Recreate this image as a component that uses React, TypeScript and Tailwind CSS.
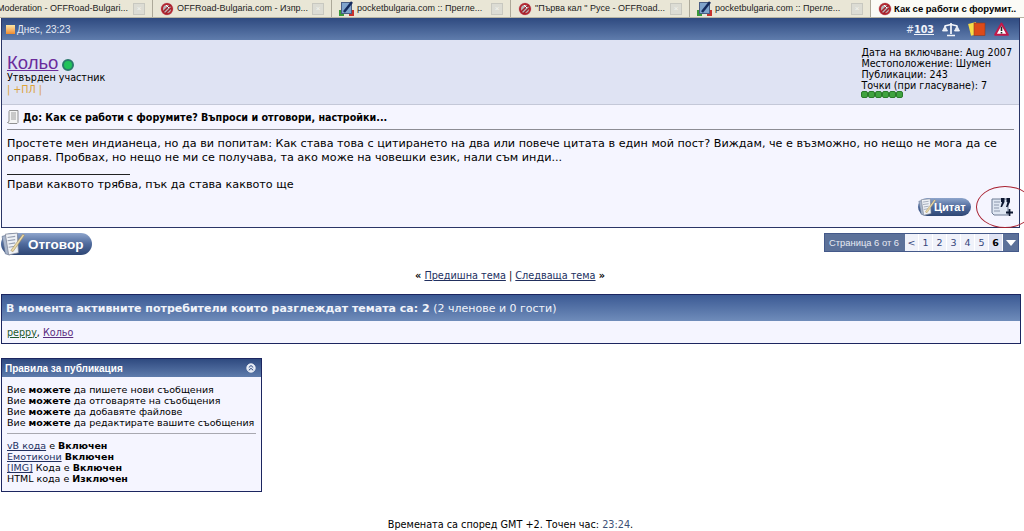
import React from 'react';

const tabs = [
  { w: 'w-[153px] pl-0', title: 'Moderation - OFFRoad-Bulgari...', icon: 'none', indent: '-ml-[3px]' },
  { w: 'w-[179px] pl-[7px]', title: 'OFFRoad-Bulgaria.com - Изпр...', icon: 'off' },
  { w: 'w-[179px] pl-[7px]', title: 'pocketbulgaria.com :: Прегле...', icon: 'pocket' },
  { w: 'w-[179px] pl-[7px]', title: '"Първа кал " Русе - OFFRoad...', icon: 'off' },
  { w: 'w-[181px] pl-[7px]', title: 'pocketbulgaria.com :: Прегле...', icon: 'pocket' },
];

function OffIcon() {
  return (
    <svg width="14" height="14" viewBox="0 0 14 14" className="shrink-0">
      <circle cx="7" cy="7" r="6.500" fill="#d9b9bd" />
      <circle cx="7" cy="7" r="5" fill="#b9b4b8" stroke="#b3262f" strokeWidth="2" />
      <path d="M3 10 7 6 11 3M5 12 11 6" stroke="#a11d28" strokeWidth="1.500" />
      <path d="M6 3 9 6" stroke="#fff" strokeWidth="1" />
    </svg>
  );
}

function PocketIcon() {
  return (
    <svg width="15" height="15" viewBox="0 0 15 15" className="shrink-0">
      <rect x="0" y="9" width="5" height="6" fill="#3a9a3a" />
      <rect x="10" y="9" width="5" height="6" fill="#c8322d" />
      <rect x="2.500" y="1.500" width="10" height="11" fill="#7fa3cc" stroke="#4a5d84" />
      <path d="M5 11 13 1" stroke="#142a5c" strokeWidth="2.500" />
    </svg>
  );
}

function CloseBox() {
  return <div className="w-[12px] h-[12px] shrink-0 bg-[#dcdcd4] border border-[#c8c8c0] flex items-center justify-center text-[8px] leading-none text-[#f5f5f0]">×</div>;
}

function Scales() {
  return (
    <svg width="18" height="15" viewBox="0 0 18 15">
      <path d="M9 1v11M5 13.500h8M2.500 4 9 2.500 15.500 4" stroke="#f4f6fb" strokeWidth="1.700" fill="none" />
      <path d="M3 4 .5 9h5zM15 4l-2.500 5h5z" fill="#dfe6f3" stroke="#fff" strokeWidth=".8" />
    </svg>
  );
}

function Cards() {
  return (
    <svg width="18" height="14" viewBox="0 0 18 14">
      <rect x="1.500" y="1" width="8" height="12" fill="#f6dc4a" transform="rotate(-14 5 7)" />
      <rect x="6" y="1" width="11" height="12.500" fill="#dc4a1a" stroke="#8e3a1e" strokeWidth=".6" />
    </svg>
  );
}

function Warning() {
  return (
    <svg width="15" height="14" viewBox="0 0 15 14">
      <path d="M7.500 1.500 13.800 12.800H1.200z" fill="#fff" stroke="#c2184a" strokeWidth="2" strokeLinejoin="round" />
      <path d="M7.500 4.500v4.500M7.500 10v1.500" stroke="#222" strokeWidth="1.600" />
    </svg>
  );
}

function NoteIcon() {
  return (
    <svg width="12" height="14" viewBox="0 0 12 14" className="shrink-0">
      <path d="M2.500.5h8.500v12l-1 1H2.500l-2-1 1.500-1v-10z" fill="#f4f4f4" stroke="#777" strokeWidth=".8" />
      <path d="M4 3h5M4 5h5M4 7h5M4 9h5" stroke="#888" strokeWidth=".8" />
    </svg>
  );
}

function PaperPen({ size = 22 }: { size?: number }) {
  return (
    <svg width={size} height={size} viewBox="0 0 22 22" className="shrink-0">
      <path d="M1 4 4 20 8 21 5 3z" fill="#a9b6cc" stroke="#5a6c8c" strokeWidth=".6" />
      <path d="M4 2 15 1 16 19 7 21z" fill="#eef1f6" stroke="#7d8494" strokeWidth=".7" />
      <path d="M6 5l7-1M6 8l7-1M7 11l6-1M7 14l6-1" stroke="#97a0b2" />
      <path d="M9 17 20 2l1.500 1L11 18z" fill="#ead9a8" stroke="#a38a56" strokeWidth=".5" />
    </svg>
  );
}

function MultiQuote() {
  return (
    <svg width="24" height="22" viewBox="0 0 24 22" className="shrink-0">
      <path d="M2 3h16v16H4l-2-2z" fill="#dfe6f2" stroke="#6d7a94" />
      <path d="M4 6h6M4 9h5M4 12h5M4 15h6" stroke="#8b96ac" />
      <path d="M11 2h3.500v4l-2.500 5H10.500l1.500-5h-1zM16.500 2H20v4l-2.500 5H16l1.500-5h-1z" fill="#0d1730" />
      <path d="M19.500 13v7M16 16.500h7" stroke="#0d1730" strokeWidth="1.800" />
    </svg>
  );
}

function PillButton({ label, className, textClass, iconSize }: { label: string; className: string; textClass: string; iconSize: number }) {
  return (
    <div className={`flex items-center rounded-full bg-gradient-to-b from-[#8ea5cc] via-[#4f6a9c] to-[#2e4674] ${className}`}>
      <PaperPen size={iconSize} />
      <span className={`font-['Liberation_Sans',sans-serif] font-bold text-white ${textClass}`}>{label}</span>
    </div>
  );
}

export default function App() {
  return (
    <div className="relative w-[1024px] h-[531px] overflow-hidden bg-white font-['DejaVu_Sans',sans-serif] text-[9.6px] leading-[11px] text-black">
      {/* browser tabs */}
      <div className="flex h-[18px] bg-[#e9e6d6] border-b border-[#b7b4a4] font-['Liberation_Sans',sans-serif] text-[9px] text-[#222]">
        {tabs.map((t) => (
          <div key={t.w + t.title} className={`${t.w} shrink-0 flex items-center gap-[3px] pr-[7px] border-r border-[#aca899] overflow-hidden`}>
            {t.icon === 'off' && <OffIcon />}
            {t.icon === 'pocket' && <PocketIcon />}
            <span className={`flex-1 min-w-0 whitespace-nowrap ${t.indent ?? ''}`}>{t.title}</span>
            <CloseBox />
          </div>
        ))}
        <div className="flex-1 flex items-center gap-[2px] pl-[7px] bg-[#fbfbf6] font-bold text-[9.5px] whitespace-nowrap overflow-hidden text-black">
          <OffIcon />
          <span>Как се работи с форумит..</span>
        </div>
      </div>

      {/* post */}
      <div className="ml-[1px] mr-[4px] border-x border-b border-[#2a3566]">
        <div className="h-[22px] flex items-center justify-between pl-[4px] pr-[10px] bg-gradient-to-b from-[#2f4a80] to-[#5f7cac] text-[#e4e9f4]">
          <div className="flex items-center gap-[2px] font-['Liberation_Sans',sans-serif] text-[10px]">
            <div className="w-[9px] h-[9px] bg-gradient-to-b from-[#fbe7a4] to-[#ee8a2a]" />
            <span>Днес, 23:23</span>
          </div>
          <div className="flex items-center gap-[8px]">
            <span>#<span className="font-bold underline text-[#f0f3fa]">103</span></span>
            <Scales />
            <Cards />
            <Warning />
          </div>
        </div>

        <div className="h-[65px] flex justify-between bg-[#dfe3f3] border-b border-[#c4c8d8] pl-[5px] pr-[7px] pt-[7px]">
          <div>
            <div className="flex items-center gap-[4px] h-[20px] mt-[6px]">
              <span className="text-[18.500px] leading-[20px] text-[#6a2c9c] underline font-['Liberation_Sans',sans-serif]">Кольо</span>
              <div className="w-[12px] h-[12px] mt-[4px] rounded-full bg-[#21c35a] border-2 border-[#2a7a6a]" />
            </div>
            <div className="-mt-[1px]">Утвърден участник</div>
            <div className="text-[#dca23a] mt-[1px]">| +ПЛ |</div>
          </div>
          <div>
            <div>Дата на включване: Aug 2007</div>
            <div>Местоположение: Шумен</div>
            <div>Публикации: 243</div>
            <div>Точки (при гласуване): 7</div>
            <div className="flex">
              {[0, 1, 2, 3, 4, 5].map((i) => (
                <div key={i} className="w-[7px] h-[7px] bg-[#3fa33f] rounded-[2px] border border-[#2a7a2a]" />
              ))}
            </div>
          </div>
        </div>

        <div className="h-[122px] flex flex-col bg-[#f5f5ff] px-[5px] pt-[4px]">
          <div className="flex items-center gap-[4px] h-[16px] font-bold text-[9.6px]">
            <NoteIcon />
            <span>До: Как се работи с форумите? Въпроси и отговори, настройки...</span>
          </div>
          <div className="h-[1px] bg-[#8c8c94] mt-[4px]" />
          <p className="mt-[7px] text-[11.200px] leading-[14px] pr-[10px]">
            Простете мен индианеца, но да ви попитам: Как става това с цитирането на два или повече цитата в един мой пост? Виждам, че е възможно, но нещо не мога да се оправя. Пробвах, но нещо не ми се получава, та ако може на човешки език, нали съм инди...
          </p>
          <div className="h-[1px] w-[123px] bg-[#222] mt-[9px]" />
          <p className="mt-[3px] text-[11.200px] leading-[14px]">Прави каквото трябва, пък да става каквото ще</p>
          <div className="flex justify-end items-center gap-[19px] mt-[4px] -mr-[1px] pr-[1px]">
            <PillButton label="Цитат" className="w-[53px] h-[18px]" textClass="text-[11px] -ml-[2px]" iconSize={18} />
            <MultiQuote />
          </div>
        </div>
      </div>

      {/* reply + pager */}
      <div className="flex justify-between items-start mt-[5px] ml-[1px] mr-[5px]">
        <PillButton label="Отговор" className="w-[91px] h-[22px]" textClass="text-[13.500px] ml-[3px]" iconSize={24} />
        <div className="flex h-[19px] items-stretch border border-[#44598a] bg-[#5c7199]">
          <div className="w-[80px] pl-[4px] flex items-center whitespace-nowrap text-[#e6eaf3] font-['Liberation_Sans',sans-serif] text-[9.400px]">Страница 6 от 6</div>
          <div className="flex items-center bg-[#f0f2fa] text-[#35467a] text-[9.500px]">
            {['<', '1', '2', '3', '4', '5', '6'].map((p) => (
              <span key={p} className={`w-[14px] h-full flex items-center justify-center border-r border-white ${p === '6' ? 'font-bold bg-[#dfe3f3] text-black' : ''}`}>{p}</span>
            ))}
          </div>
          <div className="w-[15px] flex items-center justify-center">
            <div className="w-0 h-0 border-x-[5px] border-x-transparent border-t-[6px] border-t-white" />
          </div>
        </div>
      </div>

      <div className="mt-[15px] text-center text-[9.700px] pr-[4px]">
        <b>«</b> <span className="underline text-[#22305f]">Предишна тема</span> | <span className="underline text-[#22305f]">Следваща тема</span> <b>»</b>
      </div>

      {/* active users */}
      <div className="ml-[1px] mr-[3px] mt-[13px] border border-[#1c2660]">
        <div className="h-[26px] flex items-center pl-[4px] bg-gradient-to-b from-[#3c5a94] to-[#6f8cba] text-[11px] text-[#f0f3fa]">
          <span><b>В момента активните потребители които разглеждат темата са: 2</b> (2 членове и 0 гости)</span>
        </div>
        <div className="h-[22px] flex items-center pl-[5px] bg-[#f5f5ff]">
          <span className="underline text-[#1d5a2c]">peppy</span>,&nbsp;<span className="underline text-[#5a2c80]">Кольо</span>
        </div>
      </div>

      {/* posting rules */}
      <div className="ml-[1px] mt-[14px] w-[261px] h-[134px] border border-[#1c2660] bg-[#f5f5ff]">
        <div className="h-[18px] flex items-center justify-between pl-[3px] pr-[5px] bg-gradient-to-b from-[#2f4a80] to-[#5f7cac] text-white font-['Liberation_Sans',sans-serif] font-bold text-[10px]">
          <span>Правила за публикация</span>
          <svg width="10" height="10" viewBox="0 0 10 10">
            <circle cx="5" cy="5" r="4.200" fill="#dfe6f3" stroke="#fff" strokeWidth=".8" />
            <path d="M2.800 4.500 5 2.500 7.200 4.500M2.800 7.300 5 5.300 7.200 7.300" fill="none" stroke="#2f4a80" strokeWidth="1" />
          </svg>
        </div>
        <div className="px-[5px] pt-[7px] whitespace-nowrap text-[9.500px]">
          <div>Вие <b>можете</b> да пишете нови съобщения</div>
          <div>Вие <b>можете</b> да отговаряте на съобщения</div>
          <div>Вие <b>можете</b> да добавяте файлове</div>
          <div>Вие <b>можете</b> да редактирате вашите съобщения</div>
          <div className="h-[1px] bg-[#a8a8b0] mt-[5px] mb-[6px]" />
          <div><span className="underline text-[#22305f]">vB кода</span> е <b>Включен</b></div>
          <div><span className="underline text-[#22305f]">Емотикони</span> <b>Включен</b></div>
          <div><span className="underline text-[#22305f]">[IMG]</span> Кода е <b>Включен</b></div>
          <div>HTML кода е <b>Изключен</b></div>
        </div>
      </div>

      <div className="mt-[27px] text-center text-[9.700px] pr-[3px]">
        Времената са според GMT +2. Точен час: <span className="text-[#3c4f76]">23:24</span>.
      </div>

      {/* red marker drawn over the screenshot */}
      <div className="absolute left-[976px] top-[186px] w-[58px] h-[42px] rounded-[50%] border border-[#a82030]" />
    </div>
  );
}
